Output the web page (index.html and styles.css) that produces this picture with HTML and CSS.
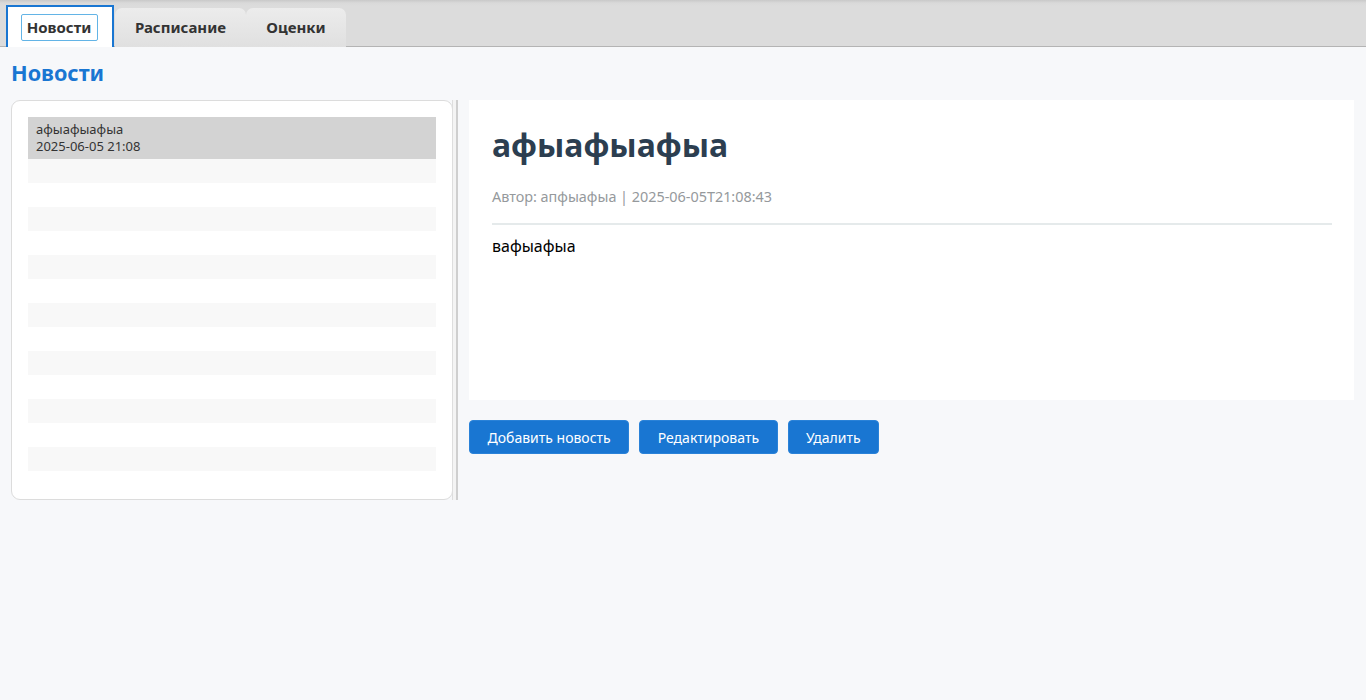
FILE: index.html
```html
<!DOCTYPE html>
<html lang="ru">
<head>
<meta charset="utf-8">
<title>Новости</title>
<link rel="stylesheet" href="styles.css">
</head>
<body>
<div class="tabbar">
  <div class="tab active"><span class="focus">Новости</span></div>
  <div class="tab tab-wide">Расписание</div>
  <div class="tab tab-narrow">Оценки</div>
</div>
<main class="page">
  <h1 class="page-title">Новости</h1>
  <div class="columns">
    <section class="list-panel">
      <ul class="news-list">
        <li class="news-item selected">
          <div>афыафыафыа</div>
          <div>2025-06-05 21:08</div>
        </li>
        <li class="row alt"></li>
        <li class="row"></li>
        <li class="row alt"></li>
        <li class="row"></li>
        <li class="row alt"></li>
        <li class="row"></li>
        <li class="row alt"></li>
        <li class="row"></li>
        <li class="row alt"></li>
        <li class="row"></li>
        <li class="row alt"></li>
        <li class="row"></li>
        <li class="row alt"></li>
      </ul>
    </section>
    <div class="splitter"></div>
    <section class="detail">
      <article class="article">
        <h2 class="article-title">афыафыафыа</h2>
        <div class="article-meta">Автор: апфыафыа | 2025-06-05T21:08:43</div>
        <hr class="article-sep">
        <p class="article-body">вафыафыа</p>
      </article>
      <div class="actions">
        <button class="btn">Добавить новость</button>
        <button class="btn">Редактировать</button>
        <button class="btn">Удалить</button>
      </div>
    </section>
  </div>
</main>
</body>
</html>
```

FILE: styles.css
```css
* { box-sizing: border-box; }
html, body { margin: 0; padding: 0; }
body {
  background: #f7f8fa;
  font-family: "Noto Sans", "Open Sans", sans-serif;
  color: #333;
  height: 700px;
  overflow: hidden;
}

.tabbar {
  height: 47px;
  background: linear-gradient(to bottom, #c9c9c9 0px, #d9d9d9 3px, #dcdcdc 6px, #dcdcdc 100%);
  border-bottom: 1px solid #b4b4b4;
  display: flex;
  align-items: flex-end;
  padding-left: 6px;
}
.tab {
  display: flex;
  align-items: center;
  justify-content: center;
  font-weight: 700;
  font-size: 15px;
  color: #333;
  height: 39px;
  padding-bottom: 2px;
  background: linear-gradient(to bottom, #ececec, #e0e0e0);
  border-radius: 7px 7px 0 0;
  margin-bottom: -1px;
}
.tab.active {
  width: 108px;
  height: 42px;
  background: #fff;
  border: 2px solid #1976d2;
  border-bottom: none;
  border-radius: 0;
  margin-right: 1px;
  padding-top: 0;
  padding-bottom: 0;
}
.tab .focus {
  display: inline-flex;
  align-items: center;
  justify-content: center;
  width: 77px;
  height: 27px;
  margin-left: -2px;
  padding-bottom: 1px;
  border: 1px solid #63b4e6;
  border-radius: 2px;
}
.tab-wide { width: 131px; }
.tab-narrow { width: 100px; }

.page {
  padding: 0 12px 0 11px;
}
.page-title {
  margin: 0;
  height: 53px;
  padding-top: 12px;
  font-size: 21.6px;
  line-height: 28px;
  font-weight: 700;
  color: #1976d2;
}

.columns {
  display: flex;
  align-items: flex-start;
}
.list-panel {
  width: 442px;
  height: 400px;
  background: #fff;
  border: 1px solid #dcdcdc;
  border-radius: 9px;
  padding: 16px;
}
.news-list {
  list-style: none;
  margin: 0;
  padding: 0;
}
.news-item {
  height: 42px;
  padding: 4px 8px 2px;
  font-size: 13px;
  line-height: 17px;
  color: #333;
}
.news-item.selected { background: #d3d3d3; }
.row { height: 24px; background: #fff; }
.row.alt { background: #f8f8f8; }

.splitter {
  width: 6px;
  height: 400px;
  border-left: 1px solid #dedede;
  border-right: 2px solid #cfcfcf;
  background: #f4f4f4;
  margin-left: -1px;
}

.detail {
  flex: 1;
  margin-left: 11px;
}
.article {
  background: #fff;
  height: 300px;
  padding: 22px 22px 0 23px;
}
.article-title {
  margin: 0;
  font-size: 32px;
  line-height: 46px;
  font-weight: 700;
  color: #2c3e50;
}
.article-meta {
  margin-top: 19px;
  font-size: 14.4px;
  line-height: 20px;
  color: #95999c;
}
.article-sep {
  margin: 16px 0 0;
  border: none;
  border-top: 2px solid #e5eaeb;
}
.article-body {
  margin: 10px 0 0;
  font-size: 16px;
  line-height: 22px;
  color: #000;
}

.actions {
  display: flex;
  gap: 10px;
  margin-top: 20px;
}
.btn {
  height: 34px;
  padding: 0 17.5px;
  background: #1976d2;
  color: #fff;
  border: 1px solid #2a82d8;
  border-radius: 4px;
  font-family: "Noto Sans", "Open Sans", sans-serif;
  font-size: 14px;
}
```
